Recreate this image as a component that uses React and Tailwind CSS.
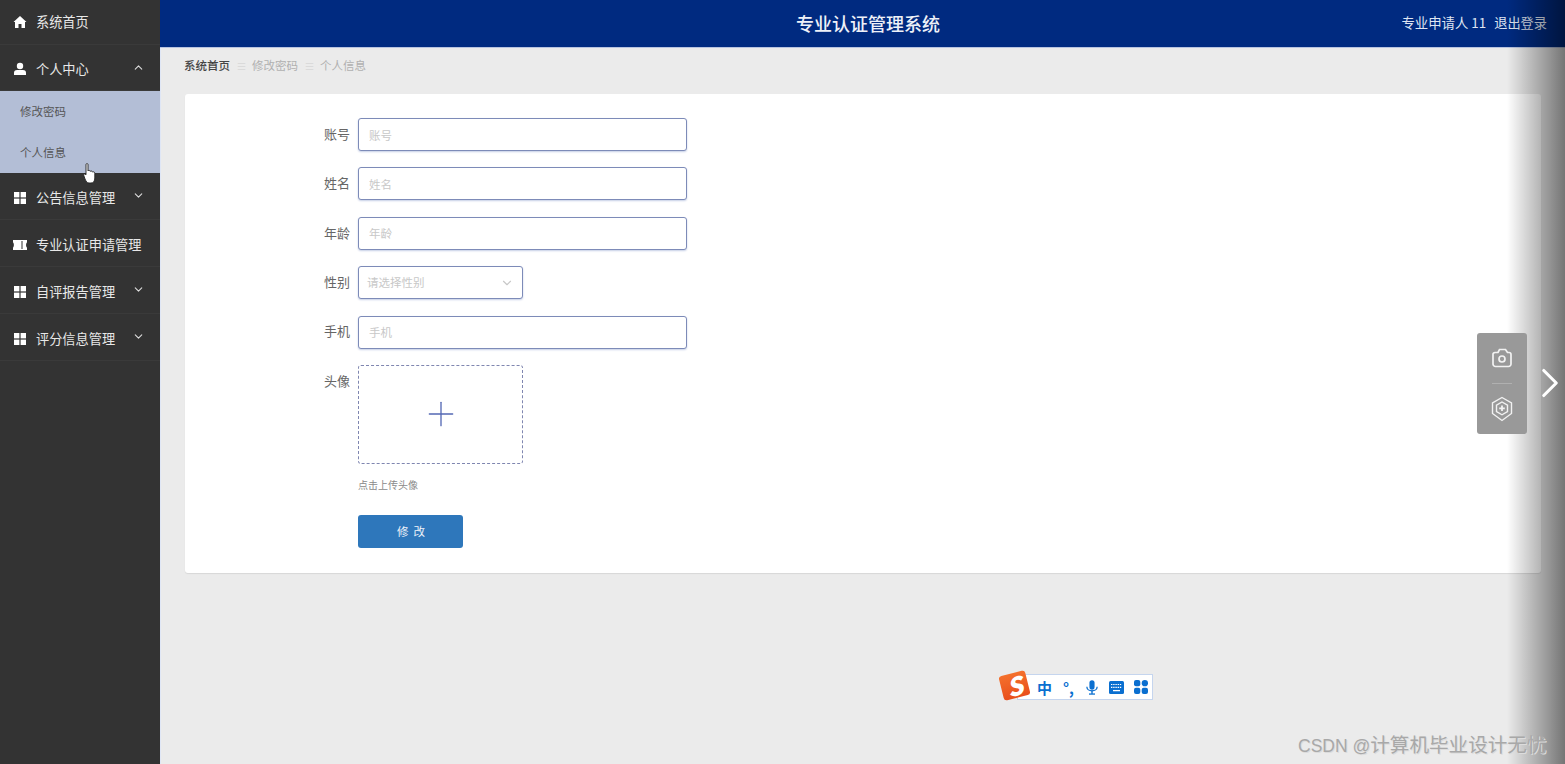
import { ChevronDown, ChevronRight, ChevronUp, Plus } from "lucide-react";

const HomeIcon = () => (
  <svg width="14" height="14" viewBox="0 0 14 14" className="shrink-0 fill-white">
    <path d="M7 1 L13.5 7 H12 V13 H8.5 V9 H5.5 V13 H2 V7 H0.5 Z" />
  </svg>
);

const UserIcon = () => (
  <svg width="14" height="14" viewBox="0 0 14 14" className="shrink-0 fill-white">
    <circle cx="7" cy="4" r="3.2" />
    <path d="M1 13 V10.5 C1 8.8 2.6 8 4 8 H10 C11.4 8 13 8.8 13 10.5 V13 Z" />
  </svg>
);

const GridIcon = () => (
  <svg width="14" height="14" viewBox="0 0 14 14" className="shrink-0 fill-white">
    <rect x="1" y="1" width="5.4" height="5.4" />
    <rect x="7.6" y="1" width="5.4" height="5.4" />
    <rect x="1" y="7.6" width="5.4" height="5.4" />
    <rect x="7.6" y="7.6" width="5.4" height="5.4" />
  </svg>
);

const TicketIcon = () => (
  <svg width="14" height="10" viewBox="0 0 14 10" className="shrink-0 fill-white">
    <path d="M0 0 H14 V2.5 C12.8 3 12.8 7 14 7.5 V10 H0 V7.5 C1.2 7 1.2 3 0 2.5 Z" />
    <rect x="8.5" y="1" width="1" height="8" fill="#333" />
  </svg>
);

const NavRow = ({ icon, label, arrow, height, offset }) => {
  return (
    <div
      className={`flex items-center border-b border-[#3a3a3a] pl-[13px] pr-4 text-[13.2px] text-[#e8e8e8] ${height} ${offset}`}
    >
      <span className="flex w-[23px] shrink-0 items-center">{icon}</span>
      <span className="flex-1 whitespace-nowrap">{label}</span>
      {arrow === "up" && <ChevronUp size={13} className="-mr-[1px] mb-[2px] text-[#ddd]" />}
      {arrow === "down" && <ChevronDown size={13} className="-mr-[1px] mb-[5px] text-[#ddd]" />}
    </div>
  );
};

const Sidebar = () => {
  return (
    <aside className="w-40 shrink-0 bg-[#333333] shadow-[1px_0_0_#dfe6f5]">
      <NavRow icon={<HomeIcon />} label="系统首页" height="h-[45px]" />
      <NavRow icon={<UserIcon />} label="个人中心" arrow="up" height="h-[46px]" offset="pt-[2px]" />
      <div className="bg-[#b3bed6] text-[11.5px] text-[#555]">
        <div className="flex h-[41px] items-center pl-5">修改密码</div>
        <div className="flex h-[41px] items-center pl-5">个人信息</div>
      </div>
      <NavRow icon={<GridIcon />} label="公告信息管理" arrow="down" height="h-[47px]" offset="pt-[4px]" />
      <NavRow icon={<TicketIcon />} label="专业认证申请管理" height="h-[47px]" offset="pt-[4px]" />
      <NavRow icon={<GridIcon />} label="自评报告管理" arrow="down" height="h-[47px]" offset="pt-[4px]" />
      <NavRow icon={<GridIcon />} label="评分信息管理" arrow="down" height="h-[47px]" offset="pt-[4px]" />
    </aside>
  );
};

const Header = () => {
  return (
    <header className="relative flex h-[47px] shrink-0 items-center justify-end bg-[#002a80] pr-[18px] text-[#dfe5f2] shadow-[0_1px_0_#b7c3e0]">
      <h1 className="absolute left-[636px] top-[11px] text-[18px] font-medium leading-6 text-[#eef1f8]">
        专业认证管理系统
      </h1>
      <span className="pb-[2px] text-[13.4px]">专业申请人 11</span>
      <span className="ml-[8px] pb-[2px] text-[13.2px]">退出登录</span>
    </header>
  );
};

const Crumbs = () => {
  const Sep = () => <span className="mx-[6.5px] text-[10px] leading-none text-[#dadada]">☰</span>;
  return (
    <div className="flex h-[47px] items-center pb-[9px] pl-6 text-[11.5px] text-[#b0b0b0]">
      <span className="font-medium text-[#444]">系统首页</span>
      <Sep />
      <span>修改密码</span>
      <Sep />
      <span>个人信息</span>
    </div>
  );
};

const Field = ({ label, children, top }) => {
  return (
    <div className={`flex ${top ? "items-start" : "items-center"}`}>
      <label className={`w-[165px] shrink-0 text-right text-[13px] text-[#666] ${top ? "pt-[6px]" : "pb-[2px]"}`}>
        {label}
      </label>
      <div className="ml-2">{children}</div>
    </div>
  );
};

const TextInput = ({ placeholder }) => {
  return (
    <input
      readOnly
      placeholder={placeholder}
      className="block h-[33px] w-[329px] rounded-[3px] border border-[#7d8bb8] bg-white px-[10px] text-[11.5px] shadow-[0_1px_2px_#c5cfe6] outline-none placeholder:text-[#c8c8c8]"
    />
  );
};

const ProfileForm = () => {
  return (
    <section className="ml-[25px] mr-6 flex h-[479px] flex-col rounded-[3px] bg-white pt-6 shadow-[0_1px_1px_#d8d8d8]">
      <div className="flex flex-col gap-[16.4px]">
        <Field label="账号">
          <TextInput placeholder="账号" />
        </Field>
        <Field label="姓名">
          <TextInput placeholder="姓名" />
        </Field>
        <Field label="年龄">
          <TextInput placeholder="年龄" />
        </Field>
        <Field label="性别">
          <div className="flex h-[33px] w-[165px] items-center justify-between rounded-[3px] border border-[#7d8bb8] bg-white pl-2 pr-2 text-[11.5px] text-[#c8c8c8] shadow-[0_1px_2px_#c5cfe6]">
            <span>请选择性别</span>
            <ChevronDown size={14} className="text-[#c8c8c8]" />
          </div>
        </Field>
        <Field label="手机">
          <TextInput placeholder="手机" />
        </Field>
        <Field label="头像" top>
          <div className="flex h-[99px] w-[165px] items-center justify-center rounded-[3px] border border-dashed border-[#7f86b0]">
            <Plus size={40} strokeWidth={0.8} className="text-[#5468b4]" />
          </div>
          <p className="mt-[14px] text-[10px] leading-[13px] text-[#8a8a8a]">点击上传头像</p>
          <button className="mt-6 block h-[33px] w-[105px] rounded-[3px] bg-[#2e77bb] pl-[2px] pt-[1px] text-[11.5px] tracking-[1.2px] text-[#eef3fa]">
            修 改
          </button>
        </Field>
      </div>
    </section>
  );
};

const SideTools = () => {
  return (
    <div className="absolute left-[1477px] top-[333px] flex h-[101px] w-[50px] flex-col items-center rounded-[3px] bg-[#999999]">
      <svg width="24" height="24" viewBox="0 0 24 24" className="mt-[13px] fill-none stroke-[#f2f2f2]" strokeWidth="1.7">
        <path d="M3 8.5 a2 2 0 0 1 2-2 h3 l1.5-3 h6 l2 3 h1.5 a2 2 0 0 1 2 2 v9.5 a2.5 2.5 0 0 1-2.5 2.5 h-13 a2.5 2.5 0 0 1-2.5-2.5 Z" />
        <circle cx="12" cy="13" r="3" />
      </svg>
      <div className="mt-[13px] h-px w-5 bg-[#b0b0b0]" />
      <svg width="24" height="26" viewBox="0 0 24 26" className="mt-3 fill-none stroke-[#f2f2f2]" strokeWidth="1.4">
        <path d="M12 1.5 L21.5 7 V17.5 L12 24.5 L2.5 17.5 V7 Z" />
        <path d="M12 6 L17.5 9.2 V15.5 L12 18.8 L6.5 15.5 V9.2 Z" />
        <path d="M12 9.5 V15 M9.2 12.3 H14.8" strokeWidth="1.8" />
      </svg>
    </div>
  );
};

const ImeBar = () => {
  return (
    <div className="absolute left-[999px] top-[670px] flex h-[30px] items-center">
      <div className="absolute left-[18px] top-[4px] flex h-[26px] w-[136px] items-center border border-[#c5d5ee] bg-white pl-[19px] text-[#0a6fd0]">
        <span className="w-[26px] text-[15px] font-bold leading-none">中</span>
        <span className="w-[23px] text-[15px] font-bold leading-none">°,</span>
        <svg width="12" height="17" viewBox="0 0 14 17" className="mr-[11px] fill-[#0a6fd0]">
          <rect x="4" y="0" width="6" height="11" rx="3" />
          <path d="M1 7.5 C1 14 13 14 13 7.5" fill="none" stroke="#0a6fd0" strokeWidth="1.5" />
          <rect x="6.2" y="12" width="1.6" height="4" />
          <rect x="3.5" y="15.4" width="7" height="1.5" />
        </svg>
        <svg width="15" height="13" viewBox="0 0 15 13" className="mr-[10px]">
          <rect width="15" height="13" rx="1.5" fill="#0a6fd0" />
          <path d="M2 3.5 H13 M2 6.3 H13" stroke="#fff" strokeWidth="1.2" strokeDasharray="1.4 0.8" />
          <path d="M4 9.6 H11" stroke="#fff" strokeWidth="1.3" />
        </svg>
        <svg width="14" height="14" viewBox="0 0 14 14" className="fill-[#0a6fd0]">
          <rect x="0" y="0" width="6.3" height="6.3" rx="2" />
          <rect x="7.7" y="0" width="6.3" height="6.3" rx="3.1" />
          <rect x="0" y="7.7" width="6.3" height="6.3" rx="2" />
          <rect x="7.7" y="7.7" width="6.3" height="6.3" rx="2" />
        </svg>
      </div>
      <div className="relative ml-[2px] flex h-[25px] w-[27px] -rotate-[14deg] items-center justify-center rounded-[3px] bg-gradient-to-b from-[#f4702c] to-[#e94e1b] text-[25px] font-black italic leading-none text-white">
        S
      </div>
    </div>
  );
};

const HandCursor = () => (
  <svg width="13" height="21" viewBox="0 0 13 21" className="absolute left-[83px] top-[163px]">
    <path
      d="M3 1.5 C3 0.3 5 0.3 5 1.5 V8 C5.5 7 7 7.2 7.2 8.4 C7.8 7.6 9.2 7.9 9.4 9 C10 8.5 11.8 8.8 11.8 10.2 V15 C11.8 18 10.5 20 8 20 H6 C4 20 3.2 18.5 2 16 L0.8 12.5 C0.4 11 2 10.4 3 11.8 Z"
      fill="#fff"
      stroke="#222"
      strokeWidth="0.9"
    />
  </svg>
);

export default function App() {
  return (
    <div
      className="relative flex h-[764px] w-[1565px] overflow-hidden bg-[#ebebeb]"
      style={{ fontFamily: '"Noto Sans CJK SC", "Liberation Sans", sans-serif' }}
    >
      <Sidebar />
      <main className="flex min-w-0 flex-1 flex-col">
        <Header />
        <Crumbs />
        <ProfileForm />
      </main>

      {/* dark fade on the right edge of the page */}
      <div className="pointer-events-none absolute inset-y-0 right-0 w-[58px] bg-gradient-to-r from-[#00000000] to-[#00000080]" />

      <SideTools />
      <ChevronRight size={50} strokeWidth={1.5} className="absolute left-[1525px] top-[358px] text-white" />
      <ImeBar />
      <HandCursor />
      <div className="absolute left-[1298px] top-[730px] whitespace-nowrap text-[19.6px] leading-7 text-[#a8a8a8] [text-shadow:1px_1px_0_#dcdcdc]">
        <span className="font-['Liberation_Sans'] text-[17.5px]">CSDN @</span>
        计算机毕业设计无忧
      </div>
    </div>
  );
}
